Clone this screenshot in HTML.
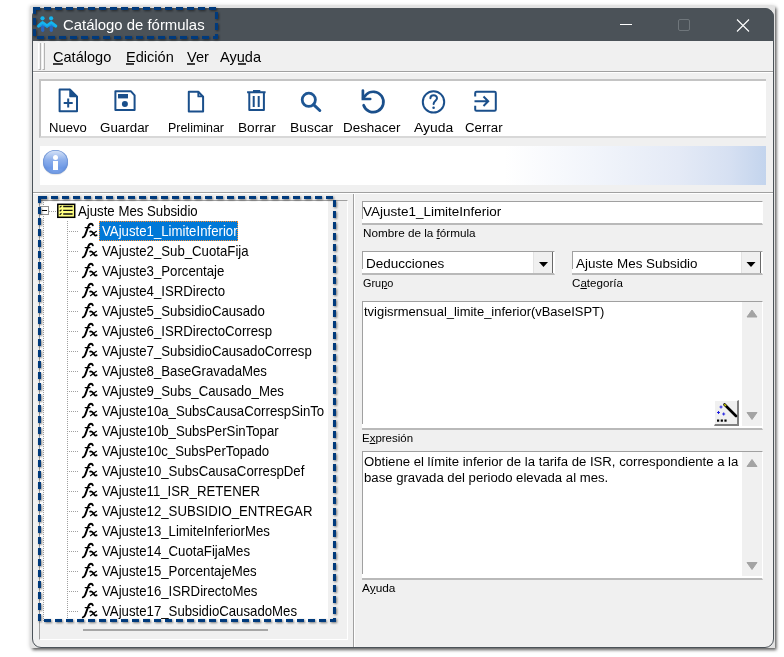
<!DOCTYPE html>
<html><head><meta charset="utf-8">
<style>
*{margin:0;padding:0;box-sizing:border-box}
html,body{width:784px;height:657px;background:#fff;overflow:hidden;position:relative;font-family:"Liberation Sans",sans-serif}
.a{position:absolute}
.t{position:absolute;white-space:pre;line-height:1}
svg{position:absolute;overflow:visible}
</style></head><body>
<div class="a" style="left:30px;top:6px;width:745px;height:642px;background:#e2e2e2;box-shadow:0 0 4px rgba(0,0,0,.2),1.5px 2px 3px rgba(0,0,0,.6)"></div>
<div class="a" style="left:32px;top:8px;width:742px;height:640px;background:#f0f0f0;border:1px solid #4b5258;border-radius:9px"></div>
<div class="a" style="left:32px;top:8px;width:742px;height:33px;background:#4b5258;border-radius:9px 9px 0 0"></div>
<svg style="left:0;top:0" width="784" height="60">
<line x1="42.7" y1="25" x2="42.7" y2="30.3" stroke="#2a66c0" stroke-width="3.2" stroke-linecap="round"/>
<line x1="51.3" y1="25" x2="51.3" y2="30.3" stroke="#2a66c0" stroke-width="3.2" stroke-linecap="round"/>
<path d="M38.6,26 L42.6,22.8 L47,26 L51.3,22.8 L55.6,26" fill="none" stroke="#14b4ee" stroke-width="3.4" stroke-linecap="round" stroke-linejoin="round"/>
<path d="M40,26.5 L42.6,24.5 L47,27.3 L51.3,24.5 L54,26.5" fill="none" stroke="#1a8fdc" stroke-width="1.2" stroke-linecap="round" stroke-linejoin="round" opacity="0.8"/>
<circle cx="42.5" cy="18.3" r="2.1" fill="#14b4ee"/><circle cx="51.1" cy="18.3" r="2.1" fill="#14b4ee"/>
<line x1="620" y1="24.5" x2="632" y2="24.5" stroke="#fff" stroke-width="1"/>
<rect x="678.5" y="19.5" width="11" height="11" rx="1.5" fill="none" stroke="#6f767b" stroke-width="1"/>
<path d="M737,19.5 L749,31.5 M749,19.5 L737,31.5" stroke="#fff" stroke-width="1.1"/>
</svg>
<div class="t" style="left:63.3px;top:17.00px;font-size:15px;color:#fff;transform:scaleX(0.993);transform-origin:0 0;">Catálogo de fórmulas</div>

<div class="a" style="left:38px;top:43px;width:3px;height:27px;border-left:1px solid #fff;border-right:1px solid #b4b4b4;border-bottom:1px solid #b4b4b4"></div>
<div class="a" style="left:42px;top:43px;width:3px;height:27px;border-left:1px solid #fff;border-right:1px solid #b4b4b4;border-bottom:1px solid #b4b4b4"></div>
<div class="t" style="left:53.3px;top:49.00px;font-size:15px;color:#000;transform:scaleX(0.97);transform-origin:0 0;">Catálogo</div>

<div class="a" style="left:53px;top:63px;width:9.5px;height:2px;background:#3c3c3c"></div>
<div class="t" style="left:126px;top:49.00px;font-size:15px;color:#000;transform:scaleX(0.97);transform-origin:0 0;">Edición</div>

<div class="a" style="left:126px;top:63px;width:8px;height:2px;background:#3c3c3c"></div>
<div class="t" style="left:187px;top:49.00px;font-size:15px;color:#000;transform:scaleX(0.97);transform-origin:0 0;">Ver</div>

<div class="a" style="left:187px;top:63px;width:8px;height:2px;background:#3c3c3c"></div>
<div class="t" style="left:219.5px;top:49.00px;font-size:15px;color:#000;transform:scaleX(0.97);transform-origin:0 0;">Ayuda</div>

<div class="a" style="left:237.5px;top:63px;width:8px;height:2px;background:#3c3c3c"></div>
<div class="a" style="left:33px;top:71px;width:740px;height:1px;background:#a0a0a0"></div>
<div class="a" style="left:33px;top:72px;width:740px;height:1px;background:#fff"></div>
<div class="a" style="left:39px;top:79px;width:727px;height:59px;background:#fff;border-top:2px solid #c4c4c4;border-left:2px solid #c4c4c4;border-bottom:2px solid #d8d8d8"></div>
<svg style="left:0;top:0" width="784" height="140">
<path d="M59.6,89.6 H70 L77,96.6 V111.2 H59.6 Z" fill="none" stroke="#1a4f8b" stroke-width="2" stroke-linejoin="round"/>
<path d="M70,89.6 L77,96.6 H70 Z" fill="#1a4f8b" stroke="#1a4f8b" stroke-width="1.5" stroke-linejoin="round"/>
<path d="M68.2,98.5 V107.5 M63.7,103 H72.7" stroke="#1a4f8b" stroke-width="2"/>
<path d="M115.4,91.3 H131 L134.6,95.4 V110 H115.4 Z" fill="none" stroke="#1a4f8b" stroke-width="2" stroke-linejoin="round"/>
<rect x="118" y="94" width="10" height="4.4" fill="#1a4f8b"/>
<circle cx="124.9" cy="104" r="3" fill="#1a4f8b"/>
<path d="M188.8,91.8 H198.3 L203.1,96.8 V111.5 H188.8 Z" fill="none" stroke="#1a4f8b" stroke-width="2" stroke-linejoin="round"/>
<path d="M198.3,91.8 V96.4 H203.1" fill="none" stroke="#1a4f8b" stroke-width="1.8" stroke-linejoin="round"/>
<path d="M253,91 H260.3 M247.1,92.3 H265.6" stroke="#1a4f8b" stroke-width="2"/>
<path d="M249.3,93 V110 H263.9 V93" fill="none" stroke="#1a4f8b" stroke-width="2" stroke-linejoin="round"/>
<path d="M253.7,96 V107 M258.7,96 V107" stroke="#1a4f8b" stroke-width="2"/>
<circle cx="308.8" cy="99.8" r="6.6" fill="none" stroke="#1e5694" stroke-width="2.8"/>
<path d="M313.6,104.6 L319.8,110.5" stroke="#1e5694" stroke-width="3" stroke-linecap="round"/>
<path d="M363.6,105.2 A10.2,10.2 0 1 0 366.2,94.6 L363.2,98" fill="none" stroke="#1a4f8b" stroke-width="2.7" stroke-linecap="round" stroke-linejoin="round"/>
<path d="M362.9,90.6 V99 H370.2" fill="none" stroke="#1a4f8b" stroke-width="2.7" stroke-linecap="round" stroke-linejoin="miter"/>
<circle cx="433.5" cy="101.9" r="10.7" fill="none" stroke="#1a4f8b" stroke-width="2"/>
<path d="M430.4,98.2 C430.4,94.3 437,94 437,98.3 C437,100.6 433.6,101 433.6,104" fill="none" stroke="#1a4f8b" stroke-width="2" stroke-linecap="round"/>
<circle cx="433.6" cy="107.8" r="1.3" fill="#1a4f8b"/>
<path d="M475.2,96.5 V93 Q475.2,91.7 476.5,91.7 H494.5 Q495.8,91.7 495.8,93 V109.5 Q495.8,110.8 494.5,110.8 H476.5 Q475.2,110.8 475.2,109.5 V105.7" fill="none" stroke="#1a4f8b" stroke-width="2"/>
<path d="M474.5,101.3 H488 M483.5,96.5 L488.2,101.3 L483.5,106" fill="none" stroke="#1a4f8b" stroke-width="2"/>
</svg>
<div class="t" style="left:49px;top:121.00px;font-size:13.7px;color:#000;transform:scaleX(0.955);transform-origin:0 0;">Nuevo</div>

<div class="t" style="left:100px;top:121.00px;font-size:13.7px;color:#000;transform:scaleX(0.976);transform-origin:0 0;">Guardar</div>

<div class="t" style="left:167.8px;top:121.00px;font-size:13.7px;color:#000;transform:scaleX(0.909);transform-origin:0 0;">Preliminar</div>

<div class="t" style="left:237.7px;top:121.00px;font-size:13.7px;color:#000;transform:scaleX(0.997);transform-origin:0 0;">Borrar</div>

<div class="t" style="left:289.8px;top:121.00px;font-size:13.7px;color:#000;transform:scaleX(1.014);transform-origin:0 0;">Buscar</div>

<div class="t" style="left:342.6px;top:121.00px;font-size:13.7px;color:#000;transform:scaleX(0.98);transform-origin:0 0;">Deshacer</div>

<div class="t" style="left:413.8px;top:121.00px;font-size:13.7px;color:#000;transform:scaleX(1.016);transform-origin:0 0;">Ayuda</div>

<div class="t" style="left:465px;top:121.00px;font-size:13.7px;color:#000;transform:scaleX(0.969);transform-origin:0 0;">Cerrar</div>

<div class="a" style="left:40px;top:146px;width:726px;height:39px;background:linear-gradient(to right,#ffffff 0%,#ffffff 64%,#f2f5fb 76%,#e4eaf6 88%,#d6e0f2 95%,#c3d4ed 100%)"></div>
<div class="a" style="left:43.4px;top:149.9px;width:24.4px;height:24.4px;border-radius:50%;background:linear-gradient(to bottom,#dbe6f8 0%,#8fb1ec 40%,#6f9ae6 75%,#8ab0f0 100%);box-shadow:inset 0 0 0 0.7px #6d93d4,inset 0 -2px 3px rgba(60,110,200,.35),0 1px 1px rgba(0,0,0,.12)"></div>
<div class="a" style="left:43.4px;top:149.9px;width:24.4px;height:24.4px;border-radius:50%;background:radial-gradient(circle at 50% 50%,rgba(42,92,176,0) 70%,rgba(42,92,176,.45) 100%)"></div>
<div class="a" style="left:53.1px;top:154.5px;width:5px;height:5px;border-radius:50%;background:#fff"></div>
<div class="a" style="left:53.3px;top:160.5px;width:4.6px;height:9.5px;background:#fff"></div>
<div class="a" style="left:33px;top:192px;width:740px;height:1px;background:#a0a0a0"></div>
<div class="a" style="left:33px;top:193px;width:740px;height:1px;background:#fff"></div>
<div class="a" style="left:353px;top:194px;width:1px;height:453px;background:#a0a0a0"></div>
<div class="a" style="left:354px;top:194px;width:1px;height:453px;background:#fff"></div>
<div class="a" style="left:39px;top:200px;width:309px;height:440px;border-top:1px solid #a0a0a0;border-left:1px solid #a0a0a0;border-right:1px solid #fff;border-bottom:1px solid #fff"></div>
<div class="a" style="left:40px;top:201px;width:288px;height:421px;background:#fff"></div>
<div class="a" style="left:83px;top:629px;width:185px;height:2px;background:#a6a6a6"></div>
<div class="a" style="left:43px;top:200px;width:1px;height:422px;background:repeating-linear-gradient(to bottom,#a0a0a0 0 1px,transparent 1px 2px)"></div>
<div class="a" style="left:67px;top:221px;width:1px;height:401px;background:repeating-linear-gradient(to bottom,#a0a0a0 0 1px,transparent 1px 2px)"></div>
<div class="a" style="left:49px;top:211px;width:7px;height:1px;background:repeating-linear-gradient(to right,#a0a0a0 0 1px,transparent 1px 2px)"></div>
<div class="a" style="left:69px;top:231px;width:10px;height:1px;background:repeating-linear-gradient(to right,#a0a0a0 0 1px,transparent 1px 2px)"></div>
<div class="a" style="left:69px;top:251px;width:10px;height:1px;background:repeating-linear-gradient(to right,#a0a0a0 0 1px,transparent 1px 2px)"></div>
<div class="a" style="left:69px;top:271px;width:10px;height:1px;background:repeating-linear-gradient(to right,#a0a0a0 0 1px,transparent 1px 2px)"></div>
<div class="a" style="left:69px;top:291px;width:10px;height:1px;background:repeating-linear-gradient(to right,#a0a0a0 0 1px,transparent 1px 2px)"></div>
<div class="a" style="left:69px;top:311px;width:10px;height:1px;background:repeating-linear-gradient(to right,#a0a0a0 0 1px,transparent 1px 2px)"></div>
<div class="a" style="left:69px;top:331px;width:10px;height:1px;background:repeating-linear-gradient(to right,#a0a0a0 0 1px,transparent 1px 2px)"></div>
<div class="a" style="left:69px;top:351px;width:10px;height:1px;background:repeating-linear-gradient(to right,#a0a0a0 0 1px,transparent 1px 2px)"></div>
<div class="a" style="left:69px;top:371px;width:10px;height:1px;background:repeating-linear-gradient(to right,#a0a0a0 0 1px,transparent 1px 2px)"></div>
<div class="a" style="left:69px;top:391px;width:10px;height:1px;background:repeating-linear-gradient(to right,#a0a0a0 0 1px,transparent 1px 2px)"></div>
<div class="a" style="left:69px;top:411px;width:10px;height:1px;background:repeating-linear-gradient(to right,#a0a0a0 0 1px,transparent 1px 2px)"></div>
<div class="a" style="left:69px;top:431px;width:10px;height:1px;background:repeating-linear-gradient(to right,#a0a0a0 0 1px,transparent 1px 2px)"></div>
<div class="a" style="left:69px;top:451px;width:10px;height:1px;background:repeating-linear-gradient(to right,#a0a0a0 0 1px,transparent 1px 2px)"></div>
<div class="a" style="left:69px;top:471px;width:10px;height:1px;background:repeating-linear-gradient(to right,#a0a0a0 0 1px,transparent 1px 2px)"></div>
<div class="a" style="left:69px;top:491px;width:10px;height:1px;background:repeating-linear-gradient(to right,#a0a0a0 0 1px,transparent 1px 2px)"></div>
<div class="a" style="left:69px;top:511px;width:10px;height:1px;background:repeating-linear-gradient(to right,#a0a0a0 0 1px,transparent 1px 2px)"></div>
<div class="a" style="left:69px;top:531px;width:10px;height:1px;background:repeating-linear-gradient(to right,#a0a0a0 0 1px,transparent 1px 2px)"></div>
<div class="a" style="left:69px;top:551px;width:10px;height:1px;background:repeating-linear-gradient(to right,#a0a0a0 0 1px,transparent 1px 2px)"></div>
<div class="a" style="left:69px;top:571px;width:10px;height:1px;background:repeating-linear-gradient(to right,#a0a0a0 0 1px,transparent 1px 2px)"></div>
<div class="a" style="left:69px;top:591px;width:10px;height:1px;background:repeating-linear-gradient(to right,#a0a0a0 0 1px,transparent 1px 2px)"></div>
<div class="a" style="left:69px;top:611px;width:10px;height:1px;background:repeating-linear-gradient(to right,#a0a0a0 0 1px,transparent 1px 2px)"></div>
<div class="a" style="left:40px;top:206px;width:9px;height:9px;background:#fff;border:1px solid #919191"></div>
<div class="a" style="left:42px;top:210px;width:5px;height:1px;background:#000"></div>
<svg style="left:0;top:0" width="784" height="240">
<rect x="57.8" y="204.3" width="16.9" height="13" fill="#ffff80" stroke="#000" stroke-width="1.5"/>
<path d="M63.2,206.5 H72.6 M63.2,210.4 H72.6 M63.2,214 H72.6" stroke="#111" stroke-width="1.3"/>
<path d="M59.7,207.4 L61.5,205.9 M59.7,211.2 L61.5,209.7 M59.7,214.8 L61.5,213.3" stroke="#111" stroke-width="1.2"/>
</svg>
<div class="t" style="left:78px;top:204.00px;font-size:14.6px;color:#000;transform:scaleX(0.905);transform-origin:0 0;">Ajuste Mes Subsidio</div>

<div class="a" style="left:99px;top:221px;width:139px;height:20px;background:#0078d7;outline:1px dotted #ff8c28;outline-offset:-1px"></div>
<div class="t" style="left:102px;top:224.00px;font-size:14.6px;color:#fff;transform:scaleX(0.905);transform-origin:0 0;">VAjuste1_LimiteInferior</div>

<div class="t" style="left:102px;top:244.00px;font-size:14.6px;color:#000;transform:scaleX(0.905);transform-origin:0 0;">VAjuste2_Sub_CuotaFija</div>

<div class="t" style="left:102px;top:264.00px;font-size:14.6px;color:#000;transform:scaleX(0.905);transform-origin:0 0;">VAjuste3_Porcentaje</div>

<div class="t" style="left:102px;top:284.00px;font-size:14.6px;color:#000;transform:scaleX(0.905);transform-origin:0 0;">VAjuste4_ISRDirecto</div>

<div class="t" style="left:102px;top:304.00px;font-size:14.6px;color:#000;transform:scaleX(0.905);transform-origin:0 0;">VAjuste5_SubsidioCausado</div>

<div class="t" style="left:102px;top:324.00px;font-size:14.6px;color:#000;transform:scaleX(0.905);transform-origin:0 0;">VAjuste6_ISRDirectoCorresp</div>

<div class="t" style="left:102px;top:344.00px;font-size:14.6px;color:#000;transform:scaleX(0.905);transform-origin:0 0;">VAjuste7_SubsidioCausadoCorresp</div>

<div class="t" style="left:102px;top:364.00px;font-size:14.6px;color:#000;transform:scaleX(0.905);transform-origin:0 0;">VAjuste8_BaseGravadaMes</div>

<div class="t" style="left:102px;top:384.00px;font-size:14.6px;color:#000;transform:scaleX(0.905);transform-origin:0 0;">VAjuste9_Subs_Causado_Mes</div>

<div class="t" style="left:102px;top:404.00px;font-size:14.6px;color:#000;transform:scaleX(0.905);transform-origin:0 0;">VAjuste10a_SubsCausaCorrespSinTo</div>

<div class="t" style="left:102px;top:424.00px;font-size:14.6px;color:#000;transform:scaleX(0.905);transform-origin:0 0;">VAjuste10b_SubsPerSinTopar</div>

<div class="t" style="left:102px;top:444.00px;font-size:14.6px;color:#000;transform:scaleX(0.905);transform-origin:0 0;">VAjuste10c_SubsPerTopado</div>

<div class="t" style="left:102px;top:464.00px;font-size:14.6px;color:#000;transform:scaleX(0.905);transform-origin:0 0;">VAjuste10_SubsCausaCorrespDef</div>

<div class="t" style="left:102px;top:484.00px;font-size:14.6px;color:#000;transform:scaleX(0.905);transform-origin:0 0;">VAjuste11_ISR_RETENER</div>

<div class="t" style="left:102px;top:504.00px;font-size:14.6px;color:#000;transform:scaleX(0.905);transform-origin:0 0;">VAjuste12_SUBSIDIO_ENTREGAR</div>

<div class="t" style="left:102px;top:524.00px;font-size:14.6px;color:#000;transform:scaleX(0.905);transform-origin:0 0;">VAjuste13_LimiteInferiorMes</div>

<div class="t" style="left:102px;top:544.00px;font-size:14.6px;color:#000;transform:scaleX(0.905);transform-origin:0 0;">VAjuste14_CuotaFijaMes</div>

<div class="t" style="left:102px;top:564.00px;font-size:14.6px;color:#000;transform:scaleX(0.905);transform-origin:0 0;">VAjuste15_PorcentajeMes</div>

<div class="t" style="left:102px;top:584.00px;font-size:14.6px;color:#000;transform:scaleX(0.905);transform-origin:0 0;">VAjuste16_ISRDirectoMes</div>

<div class="t" style="left:102px;top:604.00px;font-size:14.6px;color:#000;transform:scaleX(0.905);transform-origin:0 0;">VAjuste17_SubsidioCausadoMes</div>

<svg style="left:0;top:0" width="784" height="657"><g fill="none" stroke="#000" stroke-linecap="round"><g transform="translate(82,223)"><path d="M0.8,14.4 Q2.4,14.2 3.3,11.6 L6.3,3.4 Q7.3,0.7 9,0.7 Q10.3,0.7 10.8,2.3" stroke-width="1.9"/><path d="M3.2,4.6 H8" stroke-width="1.3"/><path d="M8.2,8.6 Q9.6,8 11,9.8 L12.4,11.8 Q13.4,13 14.6,12.3" stroke-width="1.8"/><path d="M14.4,8.3 L8.4,12.7" stroke-width="1.2"/></g><g transform="translate(82,243)"><path d="M0.8,14.4 Q2.4,14.2 3.3,11.6 L6.3,3.4 Q7.3,0.7 9,0.7 Q10.3,0.7 10.8,2.3" stroke-width="1.9"/><path d="M3.2,4.6 H8" stroke-width="1.3"/><path d="M8.2,8.6 Q9.6,8 11,9.8 L12.4,11.8 Q13.4,13 14.6,12.3" stroke-width="1.8"/><path d="M14.4,8.3 L8.4,12.7" stroke-width="1.2"/></g><g transform="translate(82,263)"><path d="M0.8,14.4 Q2.4,14.2 3.3,11.6 L6.3,3.4 Q7.3,0.7 9,0.7 Q10.3,0.7 10.8,2.3" stroke-width="1.9"/><path d="M3.2,4.6 H8" stroke-width="1.3"/><path d="M8.2,8.6 Q9.6,8 11,9.8 L12.4,11.8 Q13.4,13 14.6,12.3" stroke-width="1.8"/><path d="M14.4,8.3 L8.4,12.7" stroke-width="1.2"/></g><g transform="translate(82,283)"><path d="M0.8,14.4 Q2.4,14.2 3.3,11.6 L6.3,3.4 Q7.3,0.7 9,0.7 Q10.3,0.7 10.8,2.3" stroke-width="1.9"/><path d="M3.2,4.6 H8" stroke-width="1.3"/><path d="M8.2,8.6 Q9.6,8 11,9.8 L12.4,11.8 Q13.4,13 14.6,12.3" stroke-width="1.8"/><path d="M14.4,8.3 L8.4,12.7" stroke-width="1.2"/></g><g transform="translate(82,303)"><path d="M0.8,14.4 Q2.4,14.2 3.3,11.6 L6.3,3.4 Q7.3,0.7 9,0.7 Q10.3,0.7 10.8,2.3" stroke-width="1.9"/><path d="M3.2,4.6 H8" stroke-width="1.3"/><path d="M8.2,8.6 Q9.6,8 11,9.8 L12.4,11.8 Q13.4,13 14.6,12.3" stroke-width="1.8"/><path d="M14.4,8.3 L8.4,12.7" stroke-width="1.2"/></g><g transform="translate(82,323)"><path d="M0.8,14.4 Q2.4,14.2 3.3,11.6 L6.3,3.4 Q7.3,0.7 9,0.7 Q10.3,0.7 10.8,2.3" stroke-width="1.9"/><path d="M3.2,4.6 H8" stroke-width="1.3"/><path d="M8.2,8.6 Q9.6,8 11,9.8 L12.4,11.8 Q13.4,13 14.6,12.3" stroke-width="1.8"/><path d="M14.4,8.3 L8.4,12.7" stroke-width="1.2"/></g><g transform="translate(82,343)"><path d="M0.8,14.4 Q2.4,14.2 3.3,11.6 L6.3,3.4 Q7.3,0.7 9,0.7 Q10.3,0.7 10.8,2.3" stroke-width="1.9"/><path d="M3.2,4.6 H8" stroke-width="1.3"/><path d="M8.2,8.6 Q9.6,8 11,9.8 L12.4,11.8 Q13.4,13 14.6,12.3" stroke-width="1.8"/><path d="M14.4,8.3 L8.4,12.7" stroke-width="1.2"/></g><g transform="translate(82,363)"><path d="M0.8,14.4 Q2.4,14.2 3.3,11.6 L6.3,3.4 Q7.3,0.7 9,0.7 Q10.3,0.7 10.8,2.3" stroke-width="1.9"/><path d="M3.2,4.6 H8" stroke-width="1.3"/><path d="M8.2,8.6 Q9.6,8 11,9.8 L12.4,11.8 Q13.4,13 14.6,12.3" stroke-width="1.8"/><path d="M14.4,8.3 L8.4,12.7" stroke-width="1.2"/></g><g transform="translate(82,383)"><path d="M0.8,14.4 Q2.4,14.2 3.3,11.6 L6.3,3.4 Q7.3,0.7 9,0.7 Q10.3,0.7 10.8,2.3" stroke-width="1.9"/><path d="M3.2,4.6 H8" stroke-width="1.3"/><path d="M8.2,8.6 Q9.6,8 11,9.8 L12.4,11.8 Q13.4,13 14.6,12.3" stroke-width="1.8"/><path d="M14.4,8.3 L8.4,12.7" stroke-width="1.2"/></g><g transform="translate(82,403)"><path d="M0.8,14.4 Q2.4,14.2 3.3,11.6 L6.3,3.4 Q7.3,0.7 9,0.7 Q10.3,0.7 10.8,2.3" stroke-width="1.9"/><path d="M3.2,4.6 H8" stroke-width="1.3"/><path d="M8.2,8.6 Q9.6,8 11,9.8 L12.4,11.8 Q13.4,13 14.6,12.3" stroke-width="1.8"/><path d="M14.4,8.3 L8.4,12.7" stroke-width="1.2"/></g><g transform="translate(82,423)"><path d="M0.8,14.4 Q2.4,14.2 3.3,11.6 L6.3,3.4 Q7.3,0.7 9,0.7 Q10.3,0.7 10.8,2.3" stroke-width="1.9"/><path d="M3.2,4.6 H8" stroke-width="1.3"/><path d="M8.2,8.6 Q9.6,8 11,9.8 L12.4,11.8 Q13.4,13 14.6,12.3" stroke-width="1.8"/><path d="M14.4,8.3 L8.4,12.7" stroke-width="1.2"/></g><g transform="translate(82,443)"><path d="M0.8,14.4 Q2.4,14.2 3.3,11.6 L6.3,3.4 Q7.3,0.7 9,0.7 Q10.3,0.7 10.8,2.3" stroke-width="1.9"/><path d="M3.2,4.6 H8" stroke-width="1.3"/><path d="M8.2,8.6 Q9.6,8 11,9.8 L12.4,11.8 Q13.4,13 14.6,12.3" stroke-width="1.8"/><path d="M14.4,8.3 L8.4,12.7" stroke-width="1.2"/></g><g transform="translate(82,463)"><path d="M0.8,14.4 Q2.4,14.2 3.3,11.6 L6.3,3.4 Q7.3,0.7 9,0.7 Q10.3,0.7 10.8,2.3" stroke-width="1.9"/><path d="M3.2,4.6 H8" stroke-width="1.3"/><path d="M8.2,8.6 Q9.6,8 11,9.8 L12.4,11.8 Q13.4,13 14.6,12.3" stroke-width="1.8"/><path d="M14.4,8.3 L8.4,12.7" stroke-width="1.2"/></g><g transform="translate(82,483)"><path d="M0.8,14.4 Q2.4,14.2 3.3,11.6 L6.3,3.4 Q7.3,0.7 9,0.7 Q10.3,0.7 10.8,2.3" stroke-width="1.9"/><path d="M3.2,4.6 H8" stroke-width="1.3"/><path d="M8.2,8.6 Q9.6,8 11,9.8 L12.4,11.8 Q13.4,13 14.6,12.3" stroke-width="1.8"/><path d="M14.4,8.3 L8.4,12.7" stroke-width="1.2"/></g><g transform="translate(82,503)"><path d="M0.8,14.4 Q2.4,14.2 3.3,11.6 L6.3,3.4 Q7.3,0.7 9,0.7 Q10.3,0.7 10.8,2.3" stroke-width="1.9"/><path d="M3.2,4.6 H8" stroke-width="1.3"/><path d="M8.2,8.6 Q9.6,8 11,9.8 L12.4,11.8 Q13.4,13 14.6,12.3" stroke-width="1.8"/><path d="M14.4,8.3 L8.4,12.7" stroke-width="1.2"/></g><g transform="translate(82,523)"><path d="M0.8,14.4 Q2.4,14.2 3.3,11.6 L6.3,3.4 Q7.3,0.7 9,0.7 Q10.3,0.7 10.8,2.3" stroke-width="1.9"/><path d="M3.2,4.6 H8" stroke-width="1.3"/><path d="M8.2,8.6 Q9.6,8 11,9.8 L12.4,11.8 Q13.4,13 14.6,12.3" stroke-width="1.8"/><path d="M14.4,8.3 L8.4,12.7" stroke-width="1.2"/></g><g transform="translate(82,543)"><path d="M0.8,14.4 Q2.4,14.2 3.3,11.6 L6.3,3.4 Q7.3,0.7 9,0.7 Q10.3,0.7 10.8,2.3" stroke-width="1.9"/><path d="M3.2,4.6 H8" stroke-width="1.3"/><path d="M8.2,8.6 Q9.6,8 11,9.8 L12.4,11.8 Q13.4,13 14.6,12.3" stroke-width="1.8"/><path d="M14.4,8.3 L8.4,12.7" stroke-width="1.2"/></g><g transform="translate(82,563)"><path d="M0.8,14.4 Q2.4,14.2 3.3,11.6 L6.3,3.4 Q7.3,0.7 9,0.7 Q10.3,0.7 10.8,2.3" stroke-width="1.9"/><path d="M3.2,4.6 H8" stroke-width="1.3"/><path d="M8.2,8.6 Q9.6,8 11,9.8 L12.4,11.8 Q13.4,13 14.6,12.3" stroke-width="1.8"/><path d="M14.4,8.3 L8.4,12.7" stroke-width="1.2"/></g><g transform="translate(82,583)"><path d="M0.8,14.4 Q2.4,14.2 3.3,11.6 L6.3,3.4 Q7.3,0.7 9,0.7 Q10.3,0.7 10.8,2.3" stroke-width="1.9"/><path d="M3.2,4.6 H8" stroke-width="1.3"/><path d="M8.2,8.6 Q9.6,8 11,9.8 L12.4,11.8 Q13.4,13 14.6,12.3" stroke-width="1.8"/><path d="M14.4,8.3 L8.4,12.7" stroke-width="1.2"/></g><g transform="translate(82,603)"><path d="M0.8,14.4 Q2.4,14.2 3.3,11.6 L6.3,3.4 Q7.3,0.7 9,0.7 Q10.3,0.7 10.8,2.3" stroke-width="1.9"/><path d="M3.2,4.6 H8" stroke-width="1.3"/><path d="M8.2,8.6 Q9.6,8 11,9.8 L12.4,11.8 Q13.4,13 14.6,12.3" stroke-width="1.8"/><path d="M14.4,8.3 L8.4,12.7" stroke-width="1.2"/></g></g></svg>
<svg style="left:0;top:0;filter:drop-shadow(1px 1.5px 1.2px rgba(0,0,0,.5))" width="784" height="657"><g stroke="#003a7c" stroke-width="3" stroke-dasharray="7 4"><line x1="40" y1="197.5" x2="336" y2="197.5"/><line x1="44" y1="620.5" x2="336" y2="620.5"/><line x1="39.5" y1="196" x2="39.5" y2="622"/><line x1="334.5" y1="200" x2="334.5" y2="622"/></g></svg>
<svg style="left:0;top:0;filter:drop-shadow(1px 1.5px 1.2px rgba(0,0,0,.5))" width="784" height="657"><g stroke="#003a7c" stroke-width="3" stroke-dasharray="7 4"><line x1="33" y1="8.5" x2="218" y2="8.5"/><line x1="37" y1="37.5" x2="218" y2="37.5"/><line x1="34.5" y1="7" x2="34.5" y2="39"/><line x1="216.5" y1="12" x2="216.5" y2="39"/></g></svg>
<div class="a" style="left:362px;top:201px;width:401px;height:24px;background:#fff;border-top:1px solid #a0a0a0;border-bottom:2px solid #b9b9b9;border-right:1px solid #fff"></div><div class="a" style="left:362px;top:202px;width:1px;height:17px;background:#a0a0a0"></div>
<div class="t" style="left:363.2px;top:205.00px;font-size:13.7px;color:#000;transform:scaleX(0.984);transform-origin:0 0;">VAjuste1_LimiteInferior</div>

<div class="t" style="left:362.8px;top:228.00px;font-size:11.4px;color:#000;transform:scaleX(1.028);transform-origin:0 0;">Nombre de la <u>f</u>órmula</div>

<div class="a" style="left:362px;top:251px;width:193px;height:24px;background:#fff;border-top:1px solid #a0a0a0;border-bottom:2px solid #b9b9b9;border-right:1px solid #fff"></div><div class="a" style="left:362px;top:252px;width:1px;height:17px;background:#a0a0a0"></div>
<div class="a" style="left:533px;top:252px;width:20px;height:21px;background:#f0f0f0;border-left:1px solid #e3e3e3;border-right:1px solid #696969"></div>
<div class="t" style="left:365.6px;top:257.00px;font-size:13.7px;color:#000;transform:scaleX(0.988);transform-origin:0 0;">Deducciones</div>

<div class="a" style="left:572px;top:251px;width:191px;height:24px;background:#fff;border-top:1px solid #a0a0a0;border-bottom:2px solid #b9b9b9;border-right:1px solid #fff"></div><div class="a" style="left:572px;top:252px;width:1px;height:17px;background:#a0a0a0"></div>
<div class="a" style="left:741px;top:252px;width:20px;height:21px;background:#f0f0f0;border-left:1px solid #e3e3e3;border-right:1px solid #696969"></div>
<div class="t" style="left:576px;top:257.00px;font-size:13.7px;color:#000;transform:scaleX(0.98);transform-origin:0 0;">Ajuste Mes Subsidio</div>

<svg style="left:0;top:0" width="784" height="657">
<path d="M539,262 H548 L543.5,267 Z" fill="#000"/>
<path d="M746.5,262 H755.5 L751,267 Z" fill="#000"/>
</svg>
<div class="t" style="left:362.5px;top:278.00px;font-size:11.4px;color:#000;transform:scaleX(0.957);transform-origin:0 0;">Gru<u>p</u>o</div>

<div class="t" style="left:572px;top:278.00px;font-size:11.4px;color:#000;transform:scaleX(1.019);transform-origin:0 0;">C<u>a</u>tegoría</div>

<div class="a" style="left:362px;top:301px;width:401px;height:129px;background:#fff;border-top:1px solid #a0a0a0;border-bottom:2px solid #b9b9b9;border-right:1px solid #fff"></div><div class="a" style="left:362px;top:302px;width:1px;height:122px;background:#a0a0a0"></div>
<div class="a" style="left:742px;top:302px;width:20px;height:124px;background:#f0f0f0"></div>
<div class="t" style="left:363.6px;top:305.00px;font-size:13.7px;color:#000;transform:scaleX(0.946);transform-origin:0 0;">tvigisrmensual_limite_inferior(vBaseISPT)</div>

<div class="t" style="left:362px;top:433.00px;font-size:11.4px;color:#000;transform:scaleX(1.007);transform-origin:0 0;">E<u>x</u>presión</div>

<div class="a" style="left:714px;top:400px;width:25px;height:26px;background:#f0f0f0;border-top:1px solid #fff;border-left:1px solid #fff;border-right:2px solid #808080;border-bottom:2px solid #808080"></div>
<svg style="left:0;top:0" width="784" height="657">
<path d="M747,317 H757 L752,310 Z" fill="#a3a3a3" stroke="#a3a3a3" stroke-width="1" stroke-linejoin="round"/>
<path d="M747,412.5 H757 L752,419.5 Z" fill="#a3a3a3" stroke="#a3a3a3" stroke-width="1" stroke-linejoin="round"/>
<path d="M724.5,404.5 L736,416" stroke="#000" stroke-width="2.6" stroke-linecap="round"/>
<path d="M724.3,404.3 L726,406" stroke="#c8c800" stroke-width="1.6"/>
<path d="M721,405.5 V408.5 M719.5,407 H722.5 M718.5,411 V414 M717,412.5 H720 M723.7,412.5 V415.5 M722.2,414 H725.2" stroke="#2020e0" stroke-width="1"/>
<rect x="717" y="419.5" width="2.2" height="2.2" fill="#000"/><rect x="720.7" y="419.5" width="2.2" height="2.2" fill="#000"/><rect x="724.4" y="419.5" width="2.2" height="2.2" fill="#000"/>
</svg>
<div class="a" style="left:362px;top:451px;width:401px;height:129px;background:#fff;border-top:1px solid #a0a0a0;border-bottom:2px solid #b9b9b9;border-right:1px solid #fff"></div><div class="a" style="left:362px;top:452px;width:1px;height:122px;background:#a0a0a0"></div>
<div class="a" style="left:742px;top:452px;width:20px;height:124px;background:#f0f0f0"></div>
<div class="t" style="left:364px;top:455.00px;font-size:13.7px;color:#000;transform:scaleX(0.961);transform-origin:0 0;">Obtiene el límite inferior de la tarifa de ISR, correspondiente a la</div>

<div class="t" style="left:364px;top:471.00px;font-size:13.7px;color:#000;transform:scaleX(0.961);transform-origin:0 0;">base gravada del periodo elevada al mes.</div>

<div class="t" style="left:362px;top:583.00px;font-size:11.4px;color:#000;transform:scaleX(1.041);transform-origin:0 0;">A<u>y</u>uda</div>

<svg style="left:0;top:0" width="784" height="657">
<path d="M747,466.5 H757 L752,459.5 Z" fill="#a3a3a3" stroke="#a3a3a3" stroke-width="1" stroke-linejoin="round"/>
<path d="M747,562.5 H757 L752,569.5 Z" fill="#a3a3a3" stroke="#a3a3a3" stroke-width="1" stroke-linejoin="round"/>
</svg>
</body></html>
